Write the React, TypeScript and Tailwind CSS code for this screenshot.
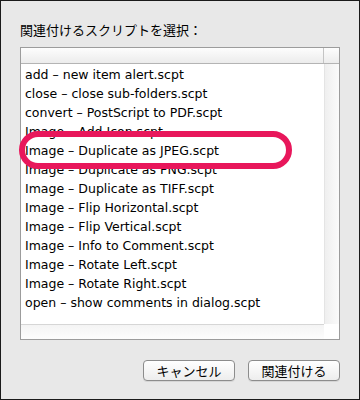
import React from "react";

const items = [
  "add – new item alert.scpt",
  "close – close sub-folders.scpt",
  "convert – PostScript to PDF.scpt",
  "Image – Add Icon.scpt",
  "Image – Duplicate as JPEG.scpt",
  "Image – Duplicate as PNG.scpt",
  "Image – Duplicate as TIFF.scpt",
  "Image – Flip Horizontal.scpt",
  "Image – Flip Vertical.scpt",
  "Image – Info to Comment.scpt",
  "Image – Rotate Left.scpt",
  "Image – Rotate Right.scpt",
  "open – show comments in dialog.scpt",
];

const jp = { fontFamily: '"Noto Sans CJK JP", "DejaVu Sans", sans-serif' };
const latin = { fontFamily: '"DejaVu Sans", "Noto Sans CJK JP", sans-serif' };

export default function App() {
  return (
    <div className="relative w-[360px] h-[400px] bg-[#e8e8e8] border border-[#1a1a1a] overflow-hidden">
      <div className="pl-[19px] pt-[20px] text-[13px] leading-[18px] text-black" style={jp}>
        関連付けるスクリプトを選択：
      </div>
      <div className="ml-[19px] mt-[8px] w-[320px] h-[293px] border border-[#9c9c9c] bg-white flex flex-col">
        <div className="h-[16px] flex border-b border-[#b4b4b4] bg-gradient-to-b from-[#fdfdfd] to-[#ececec]">
          <div className="flex-1 border-r border-[#c4c4c4]" />
          <div className="w-[15px]" />
        </div>
        <div className="flex-1 flex">
          <div className="flex-1 flex flex-col">
            <div className="flex-1 pt-[1px]">
              {items.map((t) => (
                <div key={t} className="h-[19px] pl-[4px] text-[12.5px] leading-[19px] text-black whitespace-nowrap" style={latin}>
                  {t}
                </div>
              ))}
            </div>
            <div className="h-[15px] border-t border-[#d6d6d6] bg-gradient-to-b from-[#f4f4f4] to-[#fdfdfd]" />
          </div>
          <div className="w-[15px] flex flex-col">
            <div className="flex-1 border-l border-[#e4e4e4] bg-gradient-to-r from-[#efefef] to-[#fbfbfb]" />
            <div className="h-[15px] bg-white" />
          </div>
        </div>
      </div>
      <div className="flex justify-end gap-[13px] pr-[19px] mt-[20px]">
        <button className="w-[92px] h-[21px] rounded-[4px] border border-[#8c8c8c] bg-gradient-to-b from-white to-[#ededed] shadow-[0_1px_0_rgba(0,0,0,0.08)] text-[13px] leading-[19px] text-black" style={jp}>
          キャンセル
        </button>
        <button className="w-[92px] h-[21px] rounded-[4px] border border-[#8c8c8c] bg-gradient-to-b from-white to-[#ededed] shadow-[0_1px_0_rgba(0,0,0,0.08)] text-[13px] leading-[19px] text-black" style={jp}>
          関連付ける
        </button>
      </div>
      <div className="absolute left-[18px] top-[130px] w-[273px] h-[38px] rounded-full border-[6px] border-[#e8175b] pointer-events-none" />
    </div>
  );
}
